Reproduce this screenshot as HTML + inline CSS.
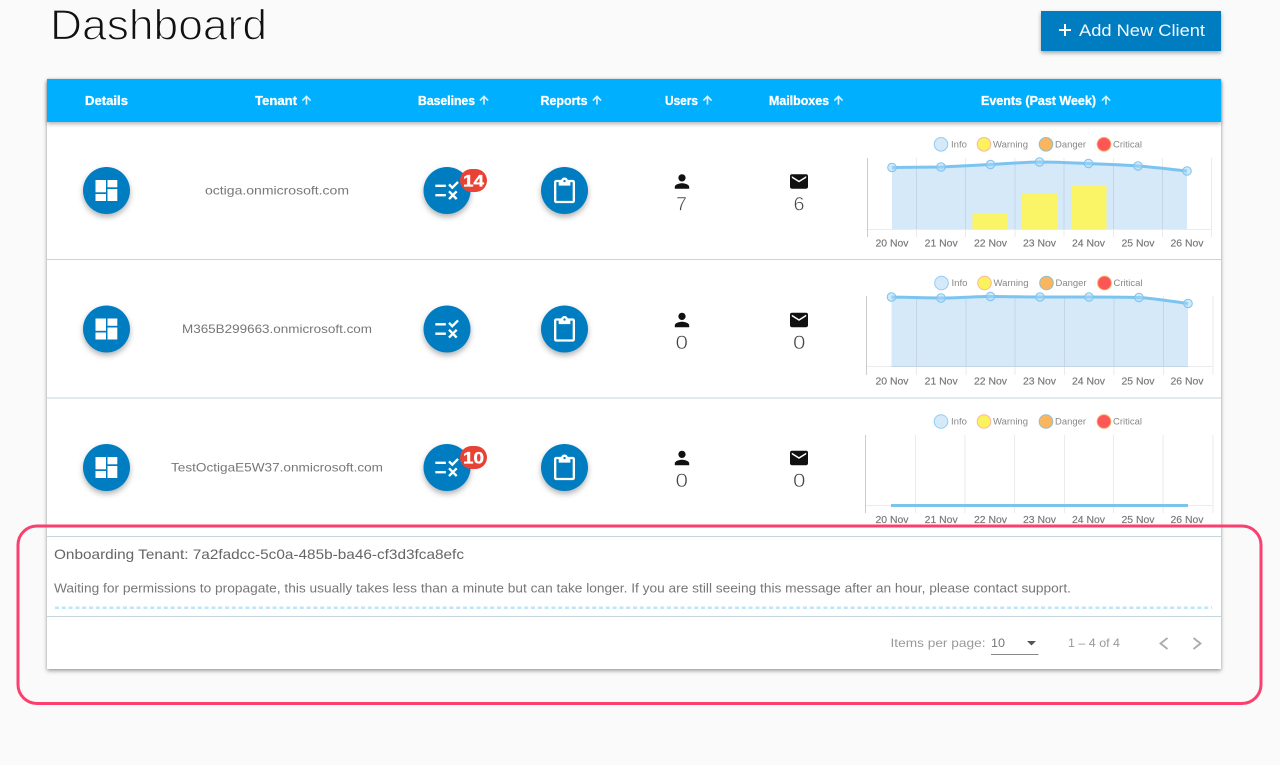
<!DOCTYPE html>
<html><head><meta charset="utf-8"><title>Dashboard</title>
<style>
html,body{margin:0;padding:0;width:1280px;height:765px;overflow:hidden;background:#fafafa;font-family:"Liberation Sans",sans-serif}
.card{position:absolute;left:47px;top:79px;width:1174px;height:590px;background:#fff;box-shadow:0 2px 4px rgba(0,0,0,.35),0 0 2px rgba(0,0,0,.12)}
.head{position:absolute;left:47px;top:79px;width:1174px;height:43px;background:#00b0ff;box-shadow:0 2px 4px rgba(0,0,0,.3)}
.btn{position:absolute;left:1041px;top:11px;width:180px;height:40px;background:#007dc1;box-shadow:0 2px 4px rgba(0,0,0,.35)}
svg.o{position:absolute;left:0;top:0}
text{font-family:"Liberation Sans",sans-serif}
.h{font-size:12.5px;font-weight:bold;fill:#fff;stroke:#fff;stroke-width:.3}
.t{font-size:12px;fill:#777}
.n{font-size:19px;fill:#444;stroke:#fff;stroke-width:.5}
.l{font-size:9px;fill:#888}
.x{font-size:10px;fill:#777;stroke:#777;stroke-width:.15}
.g{stroke:rgba(0,0,0,.08);stroke-width:1;fill:none}
.ln{fill:none;stroke:#7cc4f0;stroke-width:3}
.pt{fill:rgba(170,215,245,.55);stroke:#7cc4f0;stroke-width:1}
.b{font-size:17px;font-weight:bold;fill:#fff;stroke:#fff;stroke-width:.35}
.fab{fill:#007dc1;filter:drop-shadow(0 3px 3px rgba(0,0,0,.3))}
</style></head>
<body>
<div class="btn"></div>
<div class="card"></div>
<div class="head"></div>
<svg class="o" width="1280" height="765" viewBox="0 0 1280 765">
<defs>
<g id="dash"><rect x="95.5" y="180" width="10.5" height="12.3"/><rect x="107.5" y="180" width="9.8" height="7.3"/><rect x="95.5" y="194" width="10.5" height="7"/><rect x="107.5" y="189" width="9.8" height="12"/></g>
<path id="rule" d="M16.54 11L13 7.46l1.41-1.41 2.12 2.12 4.24-4.24 1.41 1.41L16.54 11zM11 7H2v2h9V7zm10 6.41L19.59 12 17 14.59 14.41 12 13 13.41 15.59 16 13 18.59 14.41 20 17 17.41 19.59 20 21 18.59 18.41 16 21 13.41zM11 15H2v2h9v-2z"/>
<path id="clip" d="M19 2h-4.18C14.4.84 13.3 0 12 0c-1.3 0-2.4.84-2.82 2H5c-1.1 0-2 .9-2 2v16c0 1.1.9 2 2 2h14c1.1 0 2-.9 2-2V4c0-1.1-.9-2-2-2zm-7 0c.55 0 1 .45 1 1s-.45 1-1 1-1-.45-1-1 .45-1 1-1zm7 18H5V4h2v3h10V4h2v16z"/>
<path id="person" d="M12 12c2.21 0 4-1.79 4-4s-1.79-4-4-4-4 1.79-4 4 1.79 4 4 4zm0 2c-2.67 0-8 1.34-8 4v2h16v-2c0-2.66-5.33-4-8-4z"/>
<path id="mail" d="M20 4H4c-1.1 0-1.99.9-1.99 2L2 18c0 1.1.9 2 2 2h16c1.1 0 2-.9 2-2V6c0-1.1-.9-2-2-2zm0 4l-8 5-8-5V6l8 5 8-5v2z"/>
<path id="up" d="M4 12l1.41 1.41L11 7.83V20h2V7.83l5.58 5.59L20 12l-8-8-8 8z" stroke="#d8f2ff" stroke-width="1"/>
<g id="legend">
<circle cx="941" cy="0" r="6.8" fill="#d5e9f9" stroke="#90cdf4"/>
<circle cx="984" cy="0" r="6.8" fill="#fbf25c" stroke="#f9b6a5"/>
<circle cx="1046" cy="0" r="6.8" fill="#fbb55f" stroke="#8fbfcf"/>
<circle cx="1104" cy="0" r="6.8" fill="#fd5656" stroke="#fba060"/>
<text class="l" x="951" y="3.2" textLength="16" lengthAdjust="spacingAndGlyphs">Info</text>
<text class="l" x="993" y="3.2" textLength="35" lengthAdjust="spacingAndGlyphs">Warning</text>
<text class="l" x="1055" y="3.2" textLength="31" lengthAdjust="spacingAndGlyphs">Danger</text>
<text class="l" x="1113" y="3.2" textLength="29" lengthAdjust="spacingAndGlyphs">Critical</text>
</g>
<g id="xl">
<text class="x" x="875.5" y="0" textLength="33" lengthAdjust="spacingAndGlyphs">20 Nov</text>
<text class="x" x="924.7" y="0" textLength="33" lengthAdjust="spacingAndGlyphs">21 Nov</text>
<text class="x" x="974" y="0" textLength="33" lengthAdjust="spacingAndGlyphs">22 Nov</text>
<text class="x" x="1023" y="0" textLength="33" lengthAdjust="spacingAndGlyphs">23 Nov</text>
<text class="x" x="1072" y="0" textLength="33" lengthAdjust="spacingAndGlyphs">24 Nov</text>
<text class="x" x="1121.5" y="0" textLength="33" lengthAdjust="spacingAndGlyphs">25 Nov</text>
<text class="x" x="1170.5" y="0" textLength="33" lengthAdjust="spacingAndGlyphs">26 Nov</text>
</g>
</defs>

<text x="50" y="39.3" font-size="42.5" fill="#111" stroke="#fafafa" stroke-width="1.2" textLength="217" lengthAdjust="spacingAndGlyphs">Dashboard</text>

<path d="M1059 30h12M1065 24v12" stroke="#fff" stroke-width="2" fill="none"/>
<text x="1079" y="36" font-size="17" fill="#f2f9fd" textLength="126" lengthAdjust="spacingAndGlyphs">Add New Client</text>

<!-- header -->
<text class="h" x="85" y="105" textLength="43" lengthAdjust="spacingAndGlyphs">Details</text>
<text class="h" x="255" y="105" textLength="42" lengthAdjust="spacingAndGlyphs">Tenant</text>
<text class="h" x="418" y="105" textLength="57" lengthAdjust="spacingAndGlyphs">Baselines</text>
<text class="h" x="540.5" y="105" textLength="47" lengthAdjust="spacingAndGlyphs">Reports</text>
<text class="h" x="665" y="105" textLength="33" lengthAdjust="spacingAndGlyphs">Users</text>
<text class="h" x="769" y="105" textLength="60" lengthAdjust="spacingAndGlyphs">Mailboxes</text>
<text class="h" x="981" y="105" textLength="115" lengthAdjust="spacingAndGlyphs">Events (Past Week)</text>
<g fill="#d8f2ff">
<use href="#up" transform="translate(300,93.5) scale(.54)"/>
<use href="#up" transform="translate(477.5,93.5) scale(.54)"/>
<use href="#up" transform="translate(590.5,93.5) scale(.54)"/>
<use href="#up" transform="translate(701,93.5) scale(.54)"/>
<use href="#up" transform="translate(832,93.5) scale(.54)"/>
<use href="#up" transform="translate(1099.5,93.5) scale(.54)"/>
</g>

<!-- row lines -->
<g stroke="#c6d6de" stroke-width="1">
<path d="M47 259.5H1221M47 398H1221M47 536.5H1221M47 616.5H1221"/>
</g>

<!-- row 1 -->
<circle class="fab" cx="106.5" cy="190.5" r="23.5"/>
<circle class="fab" cx="447" cy="190.5" r="23.5"/>
<circle class="fab" cx="564.5" cy="190.5" r="23.5"/>
<use href="#dash" fill="#fff"/>
<use href="#rule" fill="#fff" transform="translate(433,176.5) scale(1.167)"/>
<use href="#clip" fill="#fff" transform="translate(550.5,177.5) scale(1.167)"/>
<rect x="460" y="169" width="27" height="23" rx="11.5" fill="#e74234"/>
<text class="b" x="463" y="186.5" textLength="21" lengthAdjust="spacingAndGlyphs">14</text>
<text class="t" x="205" y="194.5" textLength="144" lengthAdjust="spacingAndGlyphs">octiga.onmicrosoft.com</text>
<use href="#person" fill="#111" transform="translate(671.2,170.7) scale(.9)"/>
<use href="#mail" fill="#111" transform="translate(788.2,170.7) scale(.9)"/>
<text class="n" x="676" y="210.5" textLength="11" lengthAdjust="spacingAndGlyphs">7</text>
<text class="n" x="793.5" y="210.5" textLength="11" lengthAdjust="spacingAndGlyphs">6</text>

<!-- row 2 -->
<circle class="fab" cx="106.5" cy="329" r="23.5"/>
<circle class="fab" cx="447" cy="329" r="23.5"/>
<circle class="fab" cx="564.5" cy="329" r="23.5"/>
<use href="#dash" fill="#fff" y="138.5"/>
<use href="#rule" fill="#fff" transform="translate(433,315) scale(1.167)"/>
<use href="#clip" fill="#fff" transform="translate(550.5,316) scale(1.167)"/>
<text class="t" x="182" y="333" textLength="190" lengthAdjust="spacingAndGlyphs">M365B299663.onmicrosoft.com</text>
<use href="#person" fill="#111" transform="translate(671.2,309.2) scale(.9)"/>
<use href="#mail" fill="#111" transform="translate(788.2,309.2) scale(.9)"/>
<text class="n" x="675.5" y="349" textLength="12.5" lengthAdjust="spacingAndGlyphs">0</text>
<text class="n" x="793" y="349" textLength="12.5" lengthAdjust="spacingAndGlyphs">0</text>

<!-- row 3 -->
<circle class="fab" cx="106.5" cy="467.5" r="23.5"/>
<circle class="fab" cx="447" cy="467.5" r="23.5"/>
<circle class="fab" cx="564.5" cy="467.5" r="23.5"/>
<use href="#dash" fill="#fff" y="277"/>
<use href="#rule" fill="#fff" transform="translate(433,453.5) scale(1.167)"/>
<use href="#clip" fill="#fff" transform="translate(550.5,454.5) scale(1.167)"/>
<rect x="460" y="446" width="27" height="23" rx="11.5" fill="#e74234"/>
<text class="b" x="463" y="463.5" textLength="21" lengthAdjust="spacingAndGlyphs">10</text>
<text class="t" x="171" y="471.5" textLength="212" lengthAdjust="spacingAndGlyphs">TestOctigaE5W37.onmicrosoft.com</text>
<use href="#person" fill="#111" transform="translate(671.2,447.2) scale(.9)"/>
<use href="#mail" fill="#111" transform="translate(788.2,447.2) scale(.9)"/>
<text class="n" x="675.5" y="487" textLength="12.5" lengthAdjust="spacingAndGlyphs">0</text>
<text class="n" x="793" y="487" textLength="12.5" lengthAdjust="spacingAndGlyphs">0</text>

<!-- chart 1 -->
<use href="#legend" y="144.3"/>
<path d="M892 167.5L941 167L990.5 164.5L1039.5 162L1088.5 163.5L1138 166L1187 171V229H892Z" fill="#d5e9f9"/>
<rect x="972.5" y="213" width="35.5" height="16" fill="#faf566"/>
<rect x="1022" y="194" width="35.5" height="35" fill="#faf566"/>
<rect x="1071" y="185" width="35.5" height="44" fill="#faf566"/>
<path class="g" d="M916.5 158V237M965.5 158V237M1015 158V237M1064 158V237M1113.5 158V237M1162.5 158V237M1211.5 158V237M867 229.5H1211.5"/>
<path d="M867.5 158V237" stroke="rgba(0,0,0,.2)" fill="none"/>
<path class="ln" d="M892 167.5C910 167.3 925 167.2 941 167C958 166.2 975 165.2 990.5 164.5C1007 163.6 1023 162.2 1039.5 162C1056 162 1072 162.8 1088.5 163.5C1105 164.2 1121 164.6 1138 166C1154 167.3 1171 169.3 1187 171"/>
<g class="pt"><circle cx="892" cy="167.5" r="4.3"/><circle cx="941" cy="167" r="4.3"/><circle cx="990.5" cy="164.5" r="4.3"/><circle cx="1039.5" cy="162" r="4.3"/><circle cx="1088.5" cy="163.5" r="4.3"/><circle cx="1138" cy="166" r="4.3"/><circle cx="1187" cy="171" r="4.3"/></g>
<use href="#xl" y="246.5"/>

<!-- chart 2 -->
<use href="#legend" x=".5" y="283"/>
<path d="M891.5 297L941 298L990.5 296.5L1040 297L1089 297L1139 297.5L1188 303.5V367H891.5Z" fill="#d5e9f9"/>
<path class="g" d="M916.5 296V375M966 296V375M1015 296V375M1064.5 296V375M1114 296V375M1163.5 296V375M1213 296V375M866.5 366.5H1213"/>
<path d="M866.5 296V375" stroke="rgba(0,0,0,.2)" fill="none"/>
<path class="ln" d="M891.5 297C908 297.3 925 298 941 298C958 298 974 296.5 990.5 296.5C1007 296.5 1023 297 1040 297H1089C1106 297 1122 297 1139 297.5C1155 298.5 1172 301.5 1188 303.5"/>
<g class="pt"><circle cx="891.5" cy="297" r="4.3"/><circle cx="941" cy="298" r="4.3"/><circle cx="990.5" cy="296.5" r="4.3"/><circle cx="1040" cy="297" r="4.3"/><circle cx="1089" cy="297" r="4.3"/><circle cx="1139" cy="297.5" r="4.3"/><circle cx="1188" cy="303.5" r="4.3"/></g>
<use href="#xl" y="384.5"/>

<!-- chart 3 -->
<use href="#legend" y="421.5"/>
<path class="g" d="M915.5 435V513M965 435V513M1014.5 435V513M1064.5 435V513M1113.5 435V513M1163 435V513M1213 435V513M865.5 505.5H1213"/>
<path d="M865.5 435V513" stroke="rgba(0,0,0,.2)" fill="none"/>
<path d="M891 505.5H1188" stroke="#7cc4f0" stroke-width="3" fill="none"/>
<use href="#xl" y="523"/>

<!-- onboarding -->
<text x="54" y="559" font-size="14" fill="#666" textLength="410" lengthAdjust="spacingAndGlyphs">Onboarding Tenant: 7a2fadcc-5c0a-485b-ba46-cf3d3fca8efc</text>
<text x="54" y="592.5" font-size="12.5" fill="#777" textLength="1017" lengthAdjust="spacingAndGlyphs">Waiting for permissions to propagate, this usually takes less than a minute but can take longer. If you are still seeing this message after an hour, please contact support.</text>
<path d="M55 607.7H1212" stroke="#bde6fb" stroke-width="2.5" stroke-dasharray="4 2.8" fill="none"/>

<!-- paginator -->
<text x="890.5" y="647" font-size="12" fill="#999" textLength="95" lengthAdjust="spacingAndGlyphs">Items per page:</text>
<text x="991" y="647" font-size="12" fill="#777" textLength="14" lengthAdjust="spacingAndGlyphs">10</text>
<path d="M1027 641h9l-4.5 4.5z" fill="#555"/>
<path d="M991 654.5H1038.5" stroke="#888" stroke-width="1" fill="none"/>
<text x="1068" y="647" font-size="12" fill="#999" textLength="52" lengthAdjust="spacingAndGlyphs">1 – 4 of 4</text>
<path d="M1167.5 638L1160.5 643.5L1167.5 649M1193.5 638L1200.5 643.5L1193.5 649" stroke="#aaa" stroke-width="1.8" fill="none"/>

<!-- annotation -->
<rect x="18" y="526" width="1243" height="177.5" rx="19" ry="19" fill="none" stroke="#fb3f6f" stroke-width="3"/>
</svg>
</body></html>
